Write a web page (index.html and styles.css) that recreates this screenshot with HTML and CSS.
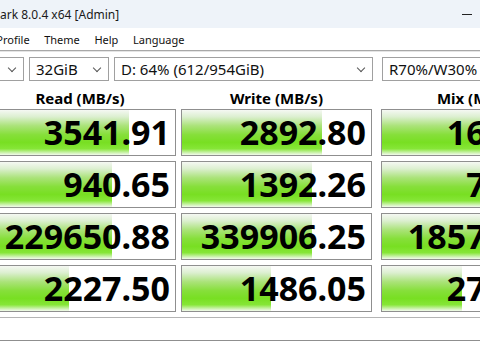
FILE: index.html
```html
<!DOCTYPE html>
<html lang="en">
<head>
    <meta charset="UTF-8">
    <title>CrystalDiskMark 8.0.4 x64 [Admin]</title>
    <link rel="stylesheet" href="styles.css">
</head>
<body>
    <div class="window">
        <div class="title-bar">
            <span class="title-text">ark 8.0.4 x64 [Admin]</span>
            <span class="min-button"></span>
        </div>

        <nav class="menu-bar">
            <span class="menu-item">Profile</span>
            <span class="menu-item">Theme</span>
            <span class="menu-item">Help</span>
            <span class="menu-item">Language</span>
        </nav>

        <div class="combo-row">
            <div class="combo combo-count"><span></span><i class="chevron"></i></div>
            <div class="combo combo-size"><span>32GiB</span><i class="chevron"></i></div>
            <div class="combo combo-drive"><span>D: 64% (612/954GiB)</span><i class="chevron"></i></div>
            <div class="combo combo-mode"><span>R70%/W30%</span><i class="chevron"></i></div>
        </div>

        <div class="results">
            <div class="col-head">Read (MB/s)</div>
            <div class="col-head">Write (MB/s)</div>
            <div class="col-head col-mix">Mix (MB/s)</div>

            <!-- SEQ1M Q8T1 -->
            <div class="cell"><div class="bar" style="width: 76%"></div><span class="value">3541.91</span></div>
            <div class="cell"><div class="bar" style="width: 74%"></div><span class="value">2892.80</span></div>
            <div class="cell col-mix"><div class="bar" style="width: 100%"></div><span class="value">1658.32</span></div>

            <!-- SEQ1M Q1T1 -->
            <div class="cell"><div class="bar" style="width: 67%"></div><span class="value">940.65</span></div>
            <div class="cell"><div class="bar" style="width: 69%"></div><span class="value">1392.26</span></div>
            <div class="cell col-mix"><div class="bar" style="width: 100%"></div><span class="value">798.15</span></div>

            <!-- RND4K Q32T16 -->
            <div class="cell"><div class="bar" style="width: 67%"></div><span class="value">229650.88</span></div>
            <div class="cell"><div class="bar" style="width: 69%"></div><span class="value">339906.25</span></div>
            <div class="cell col-mix"><div class="bar" style="width: 100%"></div><span class="value">185734.31</span></div>

            <!-- RND4K Q1T1 -->
            <div class="cell"><div class="bar" style="width: 44%"></div><span class="value">2227.50</span></div>
            <div class="cell"><div class="bar" style="width: 47%"></div><span class="value">1486.05</span></div>
            <div class="cell col-mix"><div class="bar" style="width: 41%"></div><span class="value">2745.89</span></div>
        </div>

        <div class="comment-box"></div>
    </div>
</body>
</html>
```

FILE: styles.css
```css
body {
    margin: 0;
    background-color: #fff;
    font-family: "Noto Sans", "Open Sans", sans-serif;
    color: #000;
    overflow: hidden;
}

.window {
    width: 480px;
    height: 349px;
    overflow: hidden;
}

/* Title bar */
.title-bar {
    display: flex;
    align-items: center;
    justify-content: space-between;
    height: 28px;
    background-color: #eef3f9;
    font-size: 12px;
    color: #1a1a1a;
}
.min-button {
    width: 10px;
    height: 1px;
    background-color: #222;
    margin-right: 8px;
}

/* Menu */
.menu-bar {
    display: flex;
    height: 22px;
    align-items: center;
    background-color: #fff;
    font-size: 11px;
    color: #111;
    margin-left: -11px;
    border-bottom: 1px solid #a8a8a8;
    box-shadow: 0 1px 0 #e4e4e4;
}
.menu-item {
    padding: 0 7.3px;
}

/* Combo boxes */
.combo-row {
    display: flex;
    gap: 5px;
    margin: 6px 0 0 -26px;
    height: 24px;
}
.combo {
    display: flex;
    align-items: center;
    justify-content: space-between;
    box-sizing: border-box;
    height: 24px;
    padding: 0 6px;
    border: 1px solid #a0a0a0;
    background-color: #fff;
    font-size: 15px;
    color: #111;
    flex-shrink: 0;
}
.combo-count { width: 50px; }
.combo-size { width: 80px; }
.combo-drive { width: 259px; }
.combo-mode { width: 130px; margin-left: 4px; }
.chevron {
    width: 5px;
    height: 5px;
    border-right: 1px solid #555;
    border-bottom: 1px solid #555;
    transform: rotate(45deg);
    margin: 0 2px 3px 0;
}

/* Results grid */
.results {
    display: grid;
    grid-template-columns: 192px 191px 202px;
    grid-template-rows: 22.8px repeat(4, 46.8px);
    column-gap: 5px;
    row-gap: 5.2px;
    margin-left: -16px;
}
.results .col-mix {
    margin-left: 4px;
}
.col-head {
    display: flex;
    align-items: flex-end;
    justify-content: center;
    font-weight: bold;
    font-size: 15px;
    padding-bottom: 1px;
    margin-bottom: -5.2px;
    white-space: nowrap;
}
.col-head.col-mix {
    padding-right: 7px;
}

.cell {
    position: relative;
    box-sizing: border-box;
    border: 1px solid #8f8f8f;
    background-color: #fff;
    display: flex;
    align-items: center;
    justify-content: flex-end;
    padding-right: 5px;
    overflow: hidden;
}
.bar {
    position: absolute;
    left: 0;
    top: 0;
    bottom: 0;
    background: linear-gradient(to bottom,
        #f5f8f3 0%,
        #dcefd0 15%,
        #abe37a 35%,
        #86df3a 55%,
        #78df22 72%,
        #86e637 86%,
        #d5f4bd 96%,
        #f2fbec 100%);
}
.value {
    position: relative;
    font-size: 34px;
    font-weight: bold;
    line-height: 1;
    color: #000;
    white-space: nowrap;
}

.comment-box {
    margin: 5px 0 0 -16px;
    height: 22px;
    border-top: 1px solid #b4b4b4;
    border-bottom: 1px solid #8f8f8f;
    background-color: #fff;
}
```
